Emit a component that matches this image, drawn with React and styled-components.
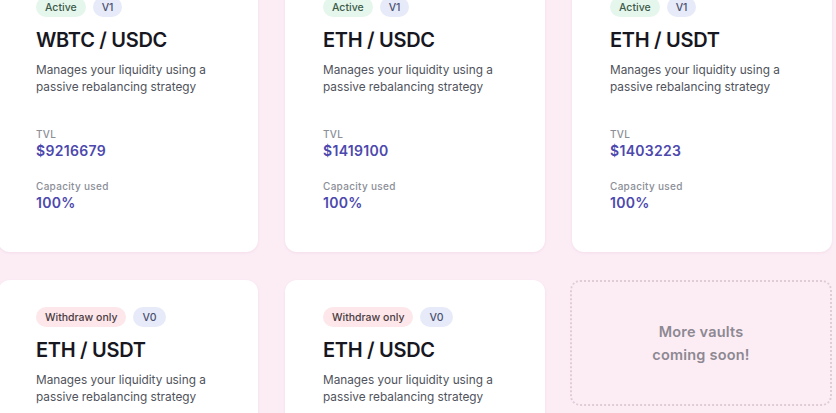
import React from 'react'
import styled, { createGlobalStyle } from 'styled-components'

const GlobalStyle = createGlobalStyle`
    html, body {
        margin: 0;
        padding: 0;
        background: #fcedf5;
        overflow: hidden;
    }
    body {
        font-family: Inter, "Noto Sans", sans-serif;
        -webkit-font-smoothing: antialiased;
    }
`

const Page = styled.div`
    width: 836px;
    height: 413px;
    overflow: hidden;
`

const Grid = styled.div`
    display: grid;
    grid-template-columns: repeat(3, 260px);
    column-gap: 27px;
    row-gap: 28px;
    align-items: start;
    margin: -30px 0 0 -2px;
`

const Card = styled.div`
    background: #ffffff;
    border-radius: 12px;
    padding: 27px 38px 40px;
    box-shadow: 0 1px 3px rgba(200, 150, 175, 0.18);
`

const Badges = styled.div`
    display: flex;
    gap: 7px;
`

const badgeColors = {
    active: { bg: '#e5f6ed', fg: '#3c5a49' },
    withdraw: { bg: '#fde7eb', fg: '#4a3b40' },
    version: { bg: '#e7ebf9', fg: '#4a5070' },
}

const Badge = styled.span`
    display: inline-flex;
    align-items: center;
    height: 20px;
    padding: 0 ${p => (p.$kind === 'version' ? 9 : 9)}px;
    border-radius: 10px;
    font-size: 10.5px;
    font-weight: 500;
    background: ${p => badgeColors[p.$kind].bg};
    color: ${p => badgeColors[p.$kind].fg};
`

const Title = styled.h2`
    margin: 11px 0 0;
    font-size: 20px;
    line-height: 24px;
    font-weight: 600;
    color: #17171f;
    letter-spacing: -0.3px;
`

const Desc = styled.p`
    margin: 10px 0 0;
    font-size: 11.8px;
    line-height: 17px;
    color: #50535c;
`

const Stats = styled.div`
    margin-top: 31px;
    display: flex;
    flex-direction: column;
    gap: 19px;
`

const Stat = styled.div``

const Label = styled.div`
    font-size: 10px;
    line-height: 14px;
    font-weight: 500;
    letter-spacing: 0.3px;
    color: #8b8e97;
`

const Value = styled.div`
    margin-top: 1px;
    font-size: 14px;
    line-height: 18px;
    font-weight: 600;
    color: #4c48ad;
    letter-spacing: 0.3px;
`

const Soon = styled.div`
    height: 126px;
    margin-left: -2px;
    border: 2px dotted #e0ccd6;
    border-radius: 10px;
    box-sizing: border-box;
    display: flex;
    align-items: center;
    justify-content: center;
    text-align: center;
    font-size: 14.5px;
    line-height: 23px;
    font-weight: 600;
    letter-spacing: 0.2px;
    color: #8d8892;
`

const vaults = [
    { status: 'active', version: 'V1', pair: 'WBTC / USDC', tvl: '$9216679', cap: '100%' },
    { status: 'active', version: 'V1', pair: 'ETH / USDC', tvl: '$1419100', cap: '100%' },
    { status: 'active', version: 'V1', pair: 'ETH / USDT', tvl: '$1403223', cap: '100%' },
    { status: 'withdraw', version: 'V0', pair: 'ETH / USDT', tvl: '$0', cap: '0%' },
    { status: 'withdraw', version: 'V0', pair: 'ETH / USDC', tvl: '$0', cap: '0%' },
]

const App = () => (
    <Page>
        <GlobalStyle />
        <Grid>
            {vaults.map((v, i) => (
                <Card key={i}>
                    <Badges>
                        <Badge $kind={v.status}>{v.status === 'active' ? 'Active' : 'Withdraw only'}</Badge>
                        <Badge $kind="version">{v.version}</Badge>
                    </Badges>
                    <Title>{v.pair}</Title>
                    <Desc>Manages your liquidity using a<br />passive rebalancing strategy</Desc>
                    <Stats>
                        <Stat>
                            <Label>TVL</Label>
                            <Value>{v.tvl}</Value>
                        </Stat>
                        <Stat>
                            <Label>Capacity used</Label>
                            <Value>{v.cap}</Value>
                        </Stat>
                    </Stats>
                </Card>
            ))}
            <Soon>More vaults<br />coming soon!</Soon>
        </Grid>
    </Page>
)

export default App
